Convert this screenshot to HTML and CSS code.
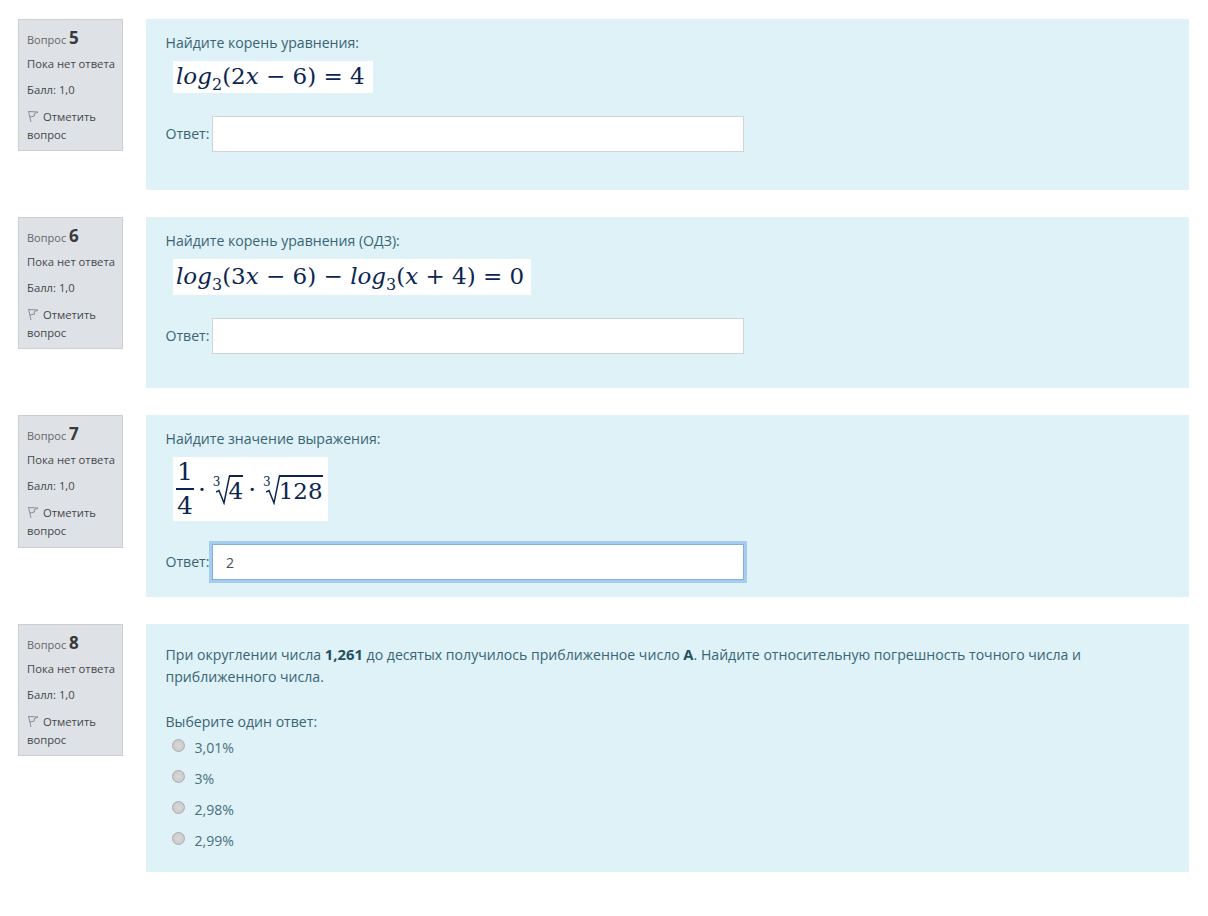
FILE: index.html
```html
<!DOCTYPE html>
<html lang="ru">
<head>
    <meta charset="UTF-8">
    <title>Тест</title>
    <link rel="stylesheet" href="styles.css">
</head>
<body>
    <main class="quiz">
        <!-- Вопрос 5 -->
        <div class="que">
            <div class="info">
                <div class="qno">Вопрос <b>5</b></div>
                <div class="state">Пока нет ответа</div>
                <div class="grade">Балл: 1,0</div>
                <div class="flag"><svg class="flag-icon" viewBox="0 0 12 13"><path d="M1.5 1 L4 12 M1.5 1.5 L11 2 L7 4 L7.5 6 L3 7" fill="none" stroke="#8a8f95" stroke-width="1"/></svg> Отметить вопрос</div>
            </div>
            <div class="content q5">
                <p class="qtext">Найдите корень уравнения:</p>
                <div class="math"><i>log</i><sub>2</sub>(2<i>x</i> − 6) = 4</div>
                <div class="answer"><label>Ответ:</label><input type="text"></div>
            </div>
        </div>

        <!-- Вопрос 6 -->
        <div class="que">
            <div class="info">
                <div class="qno">Вопрос <b>6</b></div>
                <div class="state">Пока нет ответа</div>
                <div class="grade">Балл: 1,0</div>
                <div class="flag"><svg class="flag-icon" viewBox="0 0 12 13"><path d="M1.5 1 L4 12 M1.5 1.5 L11 2 L7 4 L7.5 6 L3 7" fill="none" stroke="#8a8f95" stroke-width="1"/></svg> Отметить вопрос</div>
            </div>
            <div class="content q6">
                <p class="qtext">Найдите корень уравнения (ОДЗ):</p>
                <div class="math"><i>log</i><sub>3</sub>(3<i>x</i> − 6) − <i>log</i><sub>3</sub>(<i>x</i> + 4) = 0</div>
                <div class="answer"><label>Ответ:</label><input type="text"></div>
            </div>
        </div>

        <!-- Вопрос 7 -->
        <div class="que">
            <div class="info tall">
                <div class="qno">Вопрос <b>7</b></div>
                <div class="state">Пока нет ответа</div>
                <div class="grade">Балл: 1,0</div>
                <div class="flag"><svg class="flag-icon" viewBox="0 0 12 13"><path d="M1.5 1 L4 12 M1.5 1.5 L11 2 L7 4 L7.5 6 L3 7" fill="none" stroke="#8a8f95" stroke-width="1"/></svg> Отметить вопрос</div>
            </div>
            <div class="content q7">
                <p class="qtext">Найдите значение выражения:</p>
                <div class="math math-frac">
                    <span class="frac"><span class="num">1</span><span>4</span></span>
                    <span class="dot">·</span>
                    <span class="root"><sup>3</sup><svg class="radical" viewBox="0 0 14 30"><path d="M0 17 L3 15.5 L8 28 L13.5 1" fill="none" stroke="#0b2650" stroke-width="1.5"/></svg><span class="radicand">4</span></span>
                    <span class="dot">·</span>
                    <span class="root"><sup>3</sup><svg class="radical" viewBox="0 0 14 30"><path d="M0 17 L3 15.5 L8 28 L13.5 1" fill="none" stroke="#0b2650" stroke-width="1.5"/></svg><span class="radicand">128</span></span>
                </div>
                <div class="answer"><label>Ответ:</label><input class="focused" type="text" value="2"></div>
            </div>
        </div>

        <!-- Вопрос 8 -->
        <div class="que">
            <div class="info">
                <div class="qno">Вопрос <b>8</b></div>
                <div class="state">Пока нет ответа</div>
                <div class="grade">Балл: 1,0</div>
                <div class="flag"><svg class="flag-icon" viewBox="0 0 12 13"><path d="M1.5 1 L4 12 M1.5 1.5 L11 2 L7 4 L7.5 6 L3 7" fill="none" stroke="#8a8f95" stroke-width="1"/></svg> Отметить вопрос</div>
            </div>
            <div class="content q8">
                <p class="qtext">При округлении числа <b>1,261</b> до десятых получилось приближенное число <b>А</b>. Найдите относительную погрешность точного числа и приближенного числа.</p>
                <p class="prompt">Выберите один ответ:</p>
                <div class="options">
                    <div class="option"><span class="radio"></span>3,01%</div>
                    <div class="option"><span class="radio"></span>3%</div>
                    <div class="option"><span class="radio"></span>2,98%</div>
                    <div class="option"><span class="radio"></span>2,99%</div>
                </div>
            </div>
        </div>
    </main>
</body>
</html>
```

FILE: styles.css
```css
html, body {
    margin: 0;
    padding: 0;
    background-color: #fff;
}
body {
    font-family: "Open Sans", sans-serif;
    font-size: 14.1px;
    line-height: 22px;
    color: #3a6474;
    height: 916px;
    overflow: hidden;
}
.quiz {
    padding: 19px 19px 0 18px;
    display: flex;
    flex-direction: column;
    gap: 27px;
}
.que {
    display: flex;
    align-items: flex-start;
    gap: 23px;
}
.info {
    box-sizing: border-box;
    width: 105px;
    height: 132px;
    flex: none;
    padding: 7px 0 0 8px;
    background-color: #dee2e6;
    border: 1px solid #cbced2;
    font-size: 11.25px;
    line-height: 18px;
    color: #43474a;
}
.info.tall {
    height: 133px;
}
.qno {
    font-size: 11px;
    line-height: 22px;
    color: #666;
    height: 22px;
}
.qno b {
    font-size: 17px;
    font-weight: 700;
    color: #373a3c;
}
.state {
    margin-top: 6px;
}
.grade {
    margin-top: 8px;
}
.flag {
    margin-top: 9px;
}
.flag-icon {
    width: 12px;
    height: 13px;
    vertical-align: -2px;
    margin-right: 1px;
}
.content {
    box-sizing: border-box;
    flex: 1;
    padding: 13px 20px 0 19.5px;
    background-color: #def2f8;
}
.q5 { height: 171px; }
.q6 { height: 171px; }
.q7 { height: 182px; }
.q8 { height: 248px; padding-top: 20px; }
.qtext {
    margin: 0;
}
.qtext b {
    font-size: 14.8px;
    line-height: 0;
    color: #25505f;
}
.math {
    display: inline-block;
    margin: 7px 0 0 7.5px;
    padding: 0 8px 0 3px;
    background-color: #fff;
    font-family: "DejaVu Serif", serif;
    font-size: 23px;
    line-height: 31px;
    height: 32px;
    color: #0b2650;
    white-space: nowrap;
    vertical-align: top;
}
.math sub {
    font-size: 16px;
    line-height: 0;
}
.q6 .math {
    height: 36px;
    line-height: 34px;
    padding-right: 7px;
}
.math-frac {
    display: inline-flex;
    align-items: center;
    gap: 4px;
    height: 64px;
    padding: 0 4px 0 3px;
    font-size: 25px;
}
.frac {
    display: inline-flex;
    flex-direction: column;
    align-items: center;
    line-height: 32px;
}
.num {
    border-bottom: 2px solid #0b2650;
    padding: 0 1px;
}
.root {
    display: inline-flex;
    align-items: flex-start;
    height: 30px;
    margin: 2px 1px 0 3px;
}
.root sup {
    font-size: 12px;
    line-height: 14px;
    margin-right: -5px;
}
.radical {
    width: 14px;
    height: 30px;
    flex: none;
}
.radicand {
    border-top: 2px solid #0b2650;
    font-size: 23px;
    line-height: 28px;
    margin-left: -1px;
}
.answer {
    display: flex;
    align-items: center;
    gap: 2.5px;
    margin-top: 23px;
}
.answer label {
    line-height: 36px;
}
.answer input {
    box-sizing: border-box;
    width: 532px;
    height: 36px;
    padding: 0 13px;
    border: 1px solid #ced4da;
    background-color: #fff;
    font-family: inherit;
    font-size: 14.1px;
    color: #495057;
    outline: none;
}
.answer input.focused {
    border-color: #7fb0e0;
    box-shadow: 0 0 0 3px #a6cdf0;
}
.prompt {
    margin: 23px 0 0;
}
.options {
    margin-top: -1px;
    padding-left: 6px;
}
.option {
    display: flex;
    align-items: center;
    height: 31px;
    gap: 10px;
    color: #4a6f7b;
}
.radio {
    box-sizing: border-box;
    width: 13px;
    height: 13px;
    margin-top: -4px;
    border-radius: 50%;
    border: 1px solid #a9adb0;
    background: radial-gradient(circle at 50% 50%, #d8d8d8, #c6c6c6);
}
```
